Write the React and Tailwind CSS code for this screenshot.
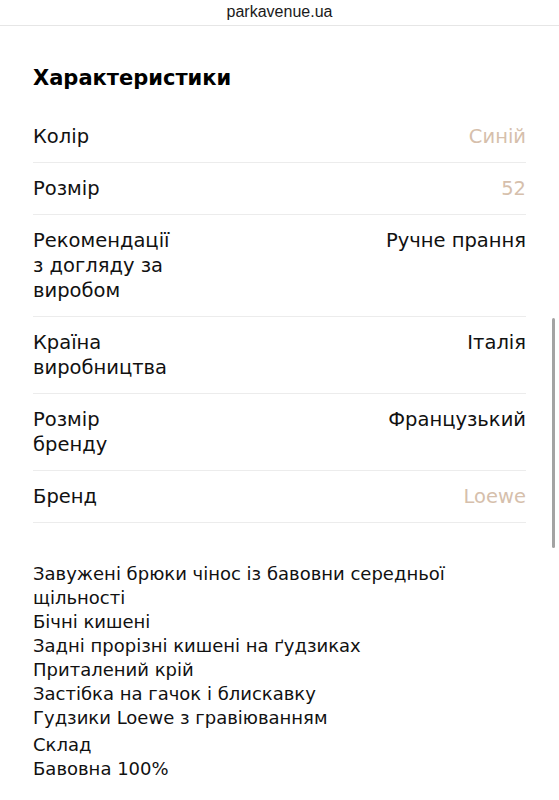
const specs = [
  { label: 'Колір', value: 'Синій', accent: true },
  { label: 'Розмір', value: '52', accent: true },
  { label: 'Рекомендації з догляду за виробом', value: 'Ручне прання' },
  { label: 'Країна виробництва', value: 'Італія' },
  { label: 'Розмір бренду', value: 'Французький' },
  { label: 'Бренд', value: 'Loewe', accent: true },
]

const details = [
  'Завужені брюки чінос із бавовни середньої щільності',
  'Бічні кишені',
  'Задні прорізні кишені на ґудзиках',
  'Приталений крій',
  'Застібка на гачок і блискавку',
  'Гудзики Loewe з гравіюванням',
]

export default function App() {
  return (
    <div className="relative w-[559px] h-[800px] overflow-hidden bg-white text-[#111] font-['DejaVu_Sans',sans-serif]">
      {/* Address bar */}
      <div className="h-[26px] border-b border-[#e6e6e6] flex items-center justify-center">
        <span className="text-[16px] text-[#1a1a1a] font-['Liberation_Sans',sans-serif] -mt-[2px]">parkavenue.ua</span>
      </div>

      <div className="px-[33px]">
        <h2 className="pt-[37px] pb-[18px] text-[21px] leading-[30px] font-bold text-black">Характеристики</h2>

        {/* Specs */}
        <div>
          {specs.map(s => (
            <div key={s.label} className="flex justify-between gap-4 py-[13px] border-b border-[#ececec] text-[19.5px] leading-[25px]">
              <span className="w-[140px]">{s.label}</span>
              <span className={s.accent ? 'text-[#d6bfac]' : ''}>{s.value}</span>
            </div>
          ))}
        </div>

        {/* Description */}
        <div className="pt-[39px] pr-[30px] text-[18px] leading-[24px]">
          {details.map(d => <p key={d}>{d}</p>)}
          <p className="mt-[3px]">Склад</p>
          <p>Бавовна 100%</p>
        </div>
      </div>

      {/* Overlay scrollbar */}
      <div className="absolute left-[552px] top-[318px] w-[3px] h-[230px] rounded-full bg-[#a3a3a3]" />
    </div>
  )
}
